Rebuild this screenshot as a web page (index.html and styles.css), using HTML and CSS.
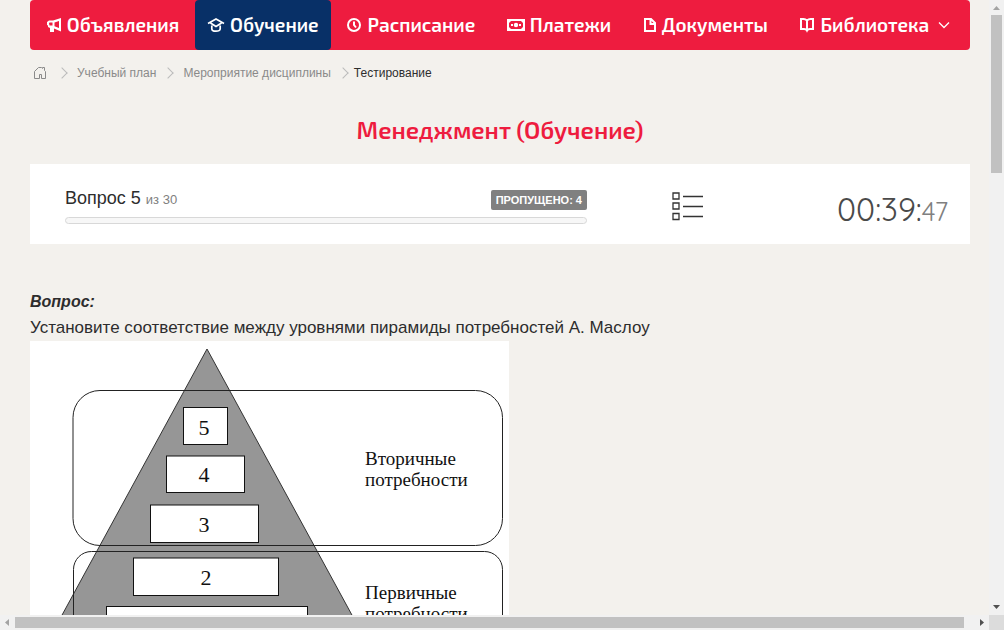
FILE: index.html
```html
<!DOCTYPE html>
<html lang="ru">
<head>
    <meta charset="UTF-8">
    <meta name="viewport" content="width=device-width, initial-scale=1.0">
    <title>Тестирование</title>
    <link rel="stylesheet" href="styles.css">
</head>
<body>

    <div class="window">
        <div class="view">
            <div class="page">

                <nav class="menu">
                    <a href="#">
                        <svg width="16" height="16" viewBox="0 0 16 16"><path fill="currentColor" fill-rule="evenodd" d="M15 1v13.500l-7-3V15H4v-4L2 10V8.500L1 8V5l2-1.500h4zM13 4L8.500 5.500v3.700L13 11zM6.500 5.500H3.500L3 6.500l.5 2h3z"/></svg>
                        <span>Объявления</span>
                    </a>
                    <a href="#" class="active">
                        <svg width="18" height="16" viewBox="0 0 18 16" fill="none" stroke="currentColor" stroke-width="1.700"><path d="M1 6.500L9 2l8 4.500M3.500 6L9 9.500 14.500 6M4.800 8.500v3.200c0 1.500 1.700 2.500 4.200 2.500s4.200-1 4.200-2.500V8.500"/></svg>
                        <span>Обучение</span>
                    </a>
                    <a href="#">
                        <svg width="16" height="16" viewBox="0 0 16 16" fill="none" stroke="currentColor" stroke-width="2"><circle cx="8" cy="8" r="6"/><path d="M8 4.500V8l2 2.500"/></svg>
                        <span>Расписание</span>
                    </a>
                    <a href="#">
                        <svg width="18" height="16" viewBox="0 0 18 16"><path fill="currentColor" fill-rule="evenodd" d="M0 2h18v12H0zM4 4L2 6v4l2 2h10l2-2V6l-2-2z"/><circle cx="9" cy="8" r="2.200" fill="currentColor"/><path fill="currentColor" d="M4 7h2v2H4zM12 7h2v2h-2z"/></svg>
                        <span>Платежи</span>
                    </a>
                    <a href="#">
                        <svg width="14" height="16" viewBox="0 0 14 16" fill="none" stroke="currentColor" stroke-width="2"><path d="M2 2h6l4 4v8H2zM7.500 2v5H12"/></svg>
                        <span>Документы</span>
                    </a>
                    <a href="#">
                        <svg width="16" height="16" viewBox="0 0 16 16" fill="none" stroke="currentColor" stroke-width="2"><path d="M8 3.500C7 2.500 6 2 4.500 2H2v10h3c1.500 0 2.500.500 3 1.500.500-1 1.500-1.500 3-1.500h3V2h-2.500C10 2 9 2.500 8 3.500zM8 3v11"/></svg>
                        <span>Библиотека</span>
                        <svg class="arrow" width="12" height="8" viewBox="0 0 12 8" fill="none" stroke="currentColor" stroke-width="1.300"><path d="M1 1.500l5 5 5-5"/></svg>
                    </a>
                </nav>

                <ol class="breadcrumbs">
                    <li class="home">
                        <a href="#" aria-label="Главная">
                            <svg width="14" height="14" viewBox="0 0 14 14" fill="none" stroke="currentColor"><path d="M1.500 12.500v-7l4-4h3l1 1v-1h2v3l1 1v7h-4v-4h-2v4z"/></svg>
                        </a>
                    </li>
                    <li><a href="#">Учебный план</a></li>
                    <li><a href="#">Мероприятие дисциплины</a></li>
                    <li class="current">Тестирование</li>
                </ol>

                <h1>Менеджмент (Обучение)</h1>

                <div class="status">
                    <div class="question-progress">
                        <div class="question-row">
                            <label for="progress">Вопрос 5 <small>из 30</small></label>
                            <span class="skipped">ПРОПУЩЕНО: 4</span>
                        </div>
                        <progress id="progress" value="0" max="30"></progress>
                    </div>
                    <button class="list-button" type="button" aria-label="Список вопросов">
                        <svg width="32" height="30" viewBox="0 0 32 30" fill="none" stroke="currentColor" stroke-width="1.300"><path d="M1 2h6v6H1zM1 12h6v6H1zM1 22.500h6v6H1zM11 5.500h20M11 15.500h20M11 25.500h20"/></svg>
                    </button>
                    <div class="timer">00:39:<span>47</span></div>
                </div>

                <div class="question">
                    <h2>Вопрос:</h2>
                    <p>Установите соответствие между уровнями пирамиды потребностей А. Маслоу</p>
                    <svg class="pyramid" width="479" height="330" viewBox="0 0 479 330">
                        <path fill="#fff" d="M0 0h479v330H0z"/>
                        <path fill="#969696" stroke="#333" d="M177 8L7 320h340z"/>
                        <g fill="none" stroke="#222">
                            <rect x="43" y="49.500" width="429.500" height="155" rx="27"/>
                            <rect x="43.500" y="210.500" width="429" height="112" rx="18"/>
                        </g>
                        <g fill="#fff" stroke="#111">
                            <rect x="153.500" y="66.500" width="44" height="37"/>
                            <rect x="136.500" y="115" width="78" height="36.500"/>
                            <rect x="120.500" y="164" width="108" height="37.500"/>
                            <rect x="103.500" y="217" width="145" height="37.500"/>
                            <rect x="76.500" y="265.500" width="201" height="38"/>
                        </g>
                        <g class="levels">
                            <text x="174" y="94">5</text>
                            <text x="174" y="141">4</text>
                            <text x="174" y="191">3</text>
                            <text x="176" y="244">2</text>
                            <text x="176" y="292">1</text>
                        </g>
                        <g class="needs">
                            <text x="335" y="124">Вторичные</text>
                            <text x="335" y="145">потребности</text>
                            <text x="335" y="258">Первичные</text>
                            <text x="335" y="279">потребности</text>
                        </g>
                    </svg>
                </div>

            </div>
        </div>

        <div class="scroll-y">
            <svg width="15" height="15" viewBox="0 0 15 15"><path fill="#a3a3a3" d="M4 10h7L7.500 6z"/></svg>
            <div class="track"><div class="thumb"></div></div>
            <svg width="15" height="15" viewBox="0 0 15 15"><path fill="#505050" d="M4 5h7L7.500 9z"/></svg>
        </div>
        <div class="scroll-x">
            <svg width="15" height="15" viewBox="0 0 15 15"><path fill="#a3a3a3" d="M9 4v7L5 7.500z"/></svg>
            <div class="track"><div class="thumb"></div></div>
            <svg width="15" height="15" viewBox="0 0 15 15"><path fill="#505050" d="M6 4v7l4-3.500z"/></svg>
        </div>
        <div class="corner"></div>
    </div>

</body>
</html>
```
FILE: styles.css
```css
body {
    margin: 0;
    font-family: "Liberation Sans", Arial, sans-serif;
    color: #2d2d2d;
    background-color: #f3f1ed;
}
.window {
    display: grid;
    grid-template-columns: minmax(0, 1fr) 15px;
    grid-template-rows: minmax(0, 1fr) 15px;
    height: 100vh;
}
.view {
    overflow: hidden;
}
.page {
    box-sizing: border-box;
    min-width: 1000px;
    padding: 0 30px;
}

/* top menu */
.menu {
    display: flex;
    height: 50px;
    background-color: #ee1c3f;
    border-radius: 4px;
}
.menu a {
    display: flex;
    flex: auto;
    align-items: center;
    justify-content: center;
    gap: 5px;
    color: #fff;
    font-family: "Exo 2", "Noto Sans", sans-serif;
    font-size: 19px;
    font-weight: 600;
    text-decoration: none;
    white-space: nowrap;
}
.menu span {
    padding-bottom: 2px;
}
.menu .active {
    flex: none;
    padding: 0 12px;
    background-color: #083067;
    border-radius: 4px;
}
.menu .arrow {
    margin: 0 4px;
}

/* breadcrumbs */
.breadcrumbs {
    display: flex;
    align-items: center;
    height: 16px;
    margin: 15px 0 0;
    padding: 0 0 0 3px;
    list-style: none;
    font-size: 12px;
}
.breadcrumbs li {
    display: flex;
    align-items: center;
}
.breadcrumbs .home {
    padding-right: 3px;
}
.breadcrumbs li + li::before {
    content: "";
    width: 7px;
    height: 7px;
    margin: 0 11px 0 8px;
    border-top: 1px solid #bbb;
    border-right: 1px solid #bbb;
    transform: rotate(45deg);
}
.breadcrumbs li + .current::before {
    margin-right: 7px;
}
.breadcrumbs a {
    display: flex;
    color: #8a8a8a;
    text-decoration: none;
}

h1 {
    margin: 32px 0 18px;
    color: #ee1c3f;
    font-family: "Exo 2", "Noto Sans", sans-serif;
    font-size: 24px;
    font-weight: 600;
    line-height: 33px;
    text-align: center;
}

/* question number and timer */
.status {
    display: flex;
    align-items: center;
    box-sizing: border-box;
    height: 80px;
    padding: 0 22px 0 35px;
    background-color: #fff;
}
.question-progress {
    flex: 0 0 522px;
    padding-top: 3px;
}
.question-row {
    display: flex;
    align-items: flex-end;
    justify-content: space-between;
    margin-bottom: 7px;
}
.question-row label {
    font-size: 18px;
    line-height: 20px;
}
.question-row small {
    color: #808080;
    font-size: 13px;
}
.skipped {
    padding: 0 5px;
    color: #fff;
    background-color: #808080;
    border-radius: 2px;
    font-size: 11px;
    font-weight: bold;
    line-height: 20px;
}
progress {
    display: block;
    box-sizing: border-box;
    width: 100%;
    height: 7px;
    border: 1px solid #d8d8d8;
    border-radius: 4px;
    background-color: #f7f7f7;
    appearance: none;
}
progress::-webkit-progress-bar {
    background-color: transparent;
}
.list-button {
    margin-left: 85px;
    padding: 4px 0 0;
    border: none;
    background: none;
    color: #333;
    cursor: pointer;
}
.list-button svg {
    display: block;
}
.timer {
    margin-left: auto;
    padding-top: 10px;
    color: #4a4a4a;
    font-family: Quicksand, Lato, sans-serif;
    font-size: 32px;
    font-weight: 400;
}
.timer span {
    color: #808080;
    font-size: 26px;
}

/* question text */
.question {
    margin-top: 48px;
}
.question h2 {
    margin: 0;
    font-size: 16px;
    font-style: italic;
    line-height: 20px;
}
.question p {
    margin: 3px 0 0;
    font-size: 17px;
    line-height: 26px;
}
.pyramid {
    display: block;
}
.pyramid text {
    fill: #111;
    font-family: "Liberation Serif", "Times New Roman", serif;
}
.levels text {
    font-size: 22px;
    text-anchor: middle;
}
.needs text {
    font-size: 19px;
}

/* scrollbars */
.scroll-y,
.scroll-x {
    display: flex;
    background-color: #f1f1f1;
}
.scroll-y {
    grid-area: 1 / 2;
    flex-direction: column;
}
.scroll-x {
    grid-area: 2 / 1;
}
.track {
    flex: 1;
}
.thumb {
    background-color: #c1c1c1;
}
.scroll-y .thumb {
    height: 27%;
    margin: 0 2px;
}
.scroll-x .track {
    padding: 2px 0;
}
.scroll-x .thumb {
    width: 99%;
    height: 11px;
}
.corner {
    background-color: #dcdcdc;
}
```
